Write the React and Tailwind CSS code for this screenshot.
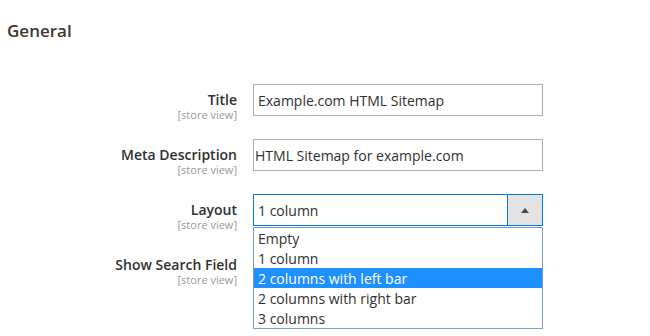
import React from "react";

const font = { fontFamily: '"Open Sans", "Noto Sans", sans-serif' };

function Label({ text }) {
  return (
    <div className="w-[237px] shrink-0 pt-[7px] text-right">
      <div className="text-[14px] leading-[18px] font-semibold text-[#303030]">{text}</div>
      <div className="text-[11px] leading-[12px] text-[#999999]">[store view]</div>
    </div>
  );
}

export default function App() {
  const opts = ["Empty", "1 column", "2 columns with left bar", "2 columns with right bar", "3 columns"];
  return (
    <div className="w-[650px] h-[336px] bg-white overflow-hidden text-[#303030]" style={font}>
      <div className="pl-[7px] pt-[20px] text-[17px] leading-[22px] font-semibold text-[#41362f]">General</div>
      <div className="mt-[42px] flex flex-col gap-[23px]">
        <div className="flex gap-[16px] h-[32px]">
          <Label text="Title" />
          <div className="w-[290px] h-[32px] border border-[#adadad] pl-[4px] flex items-center text-[14px] text-[#303030]">
            Example.com HTML Sitemap
          </div>
        </div>
        <div className="flex gap-[16px] h-[32px]">
          <Label text="Meta Description" />
          <div className="w-[290px] h-[32px] border border-[#adadad] pl-[1px] flex items-center text-[14px] text-[#303030]">
            HTML Sitemap for example.com
          </div>
        </div>
        <div className="flex gap-[16px] h-[32px] relative z-10">
          <Label text="Layout" />
          <div className="relative w-[290px]">
            <div className="h-[32px] border border-[#007bdb] flex">
              <div className="flex-1 pl-[4px] flex items-center text-[14px] text-[#303030]">1 column</div>
              <div className="w-[35px] border-l border-[#007bdb] bg-[#e3e3e3] flex items-center justify-center">
                <svg width="8" height="5" viewBox="0 0 8 5"><path d="M0 5 L4 0 L8 5 Z" fill="#514943" /></svg>
              </div>
            </div>
            <div className="absolute left-0 top-[33px] w-[290px] border border-[#7a9cd3] bg-white">
              {opts.map((o, i) => (
                <div
                  key={o}
                  className={
                    "h-[20px] pl-[4px] flex items-center text-[14px] " +
                    (i === 2 ? "bg-[#1e90ff] text-white" : "text-[#303030]")
                  }
                >
                  {o}
                </div>
              ))}
            </div>
          </div>
        </div>
        <div className="flex gap-[16px] h-[32px]">
          <Label text="Show Search Field" />
          <div className="w-[290px] h-[32px]" />
        </div>
      </div>
    </div>
  );
}
